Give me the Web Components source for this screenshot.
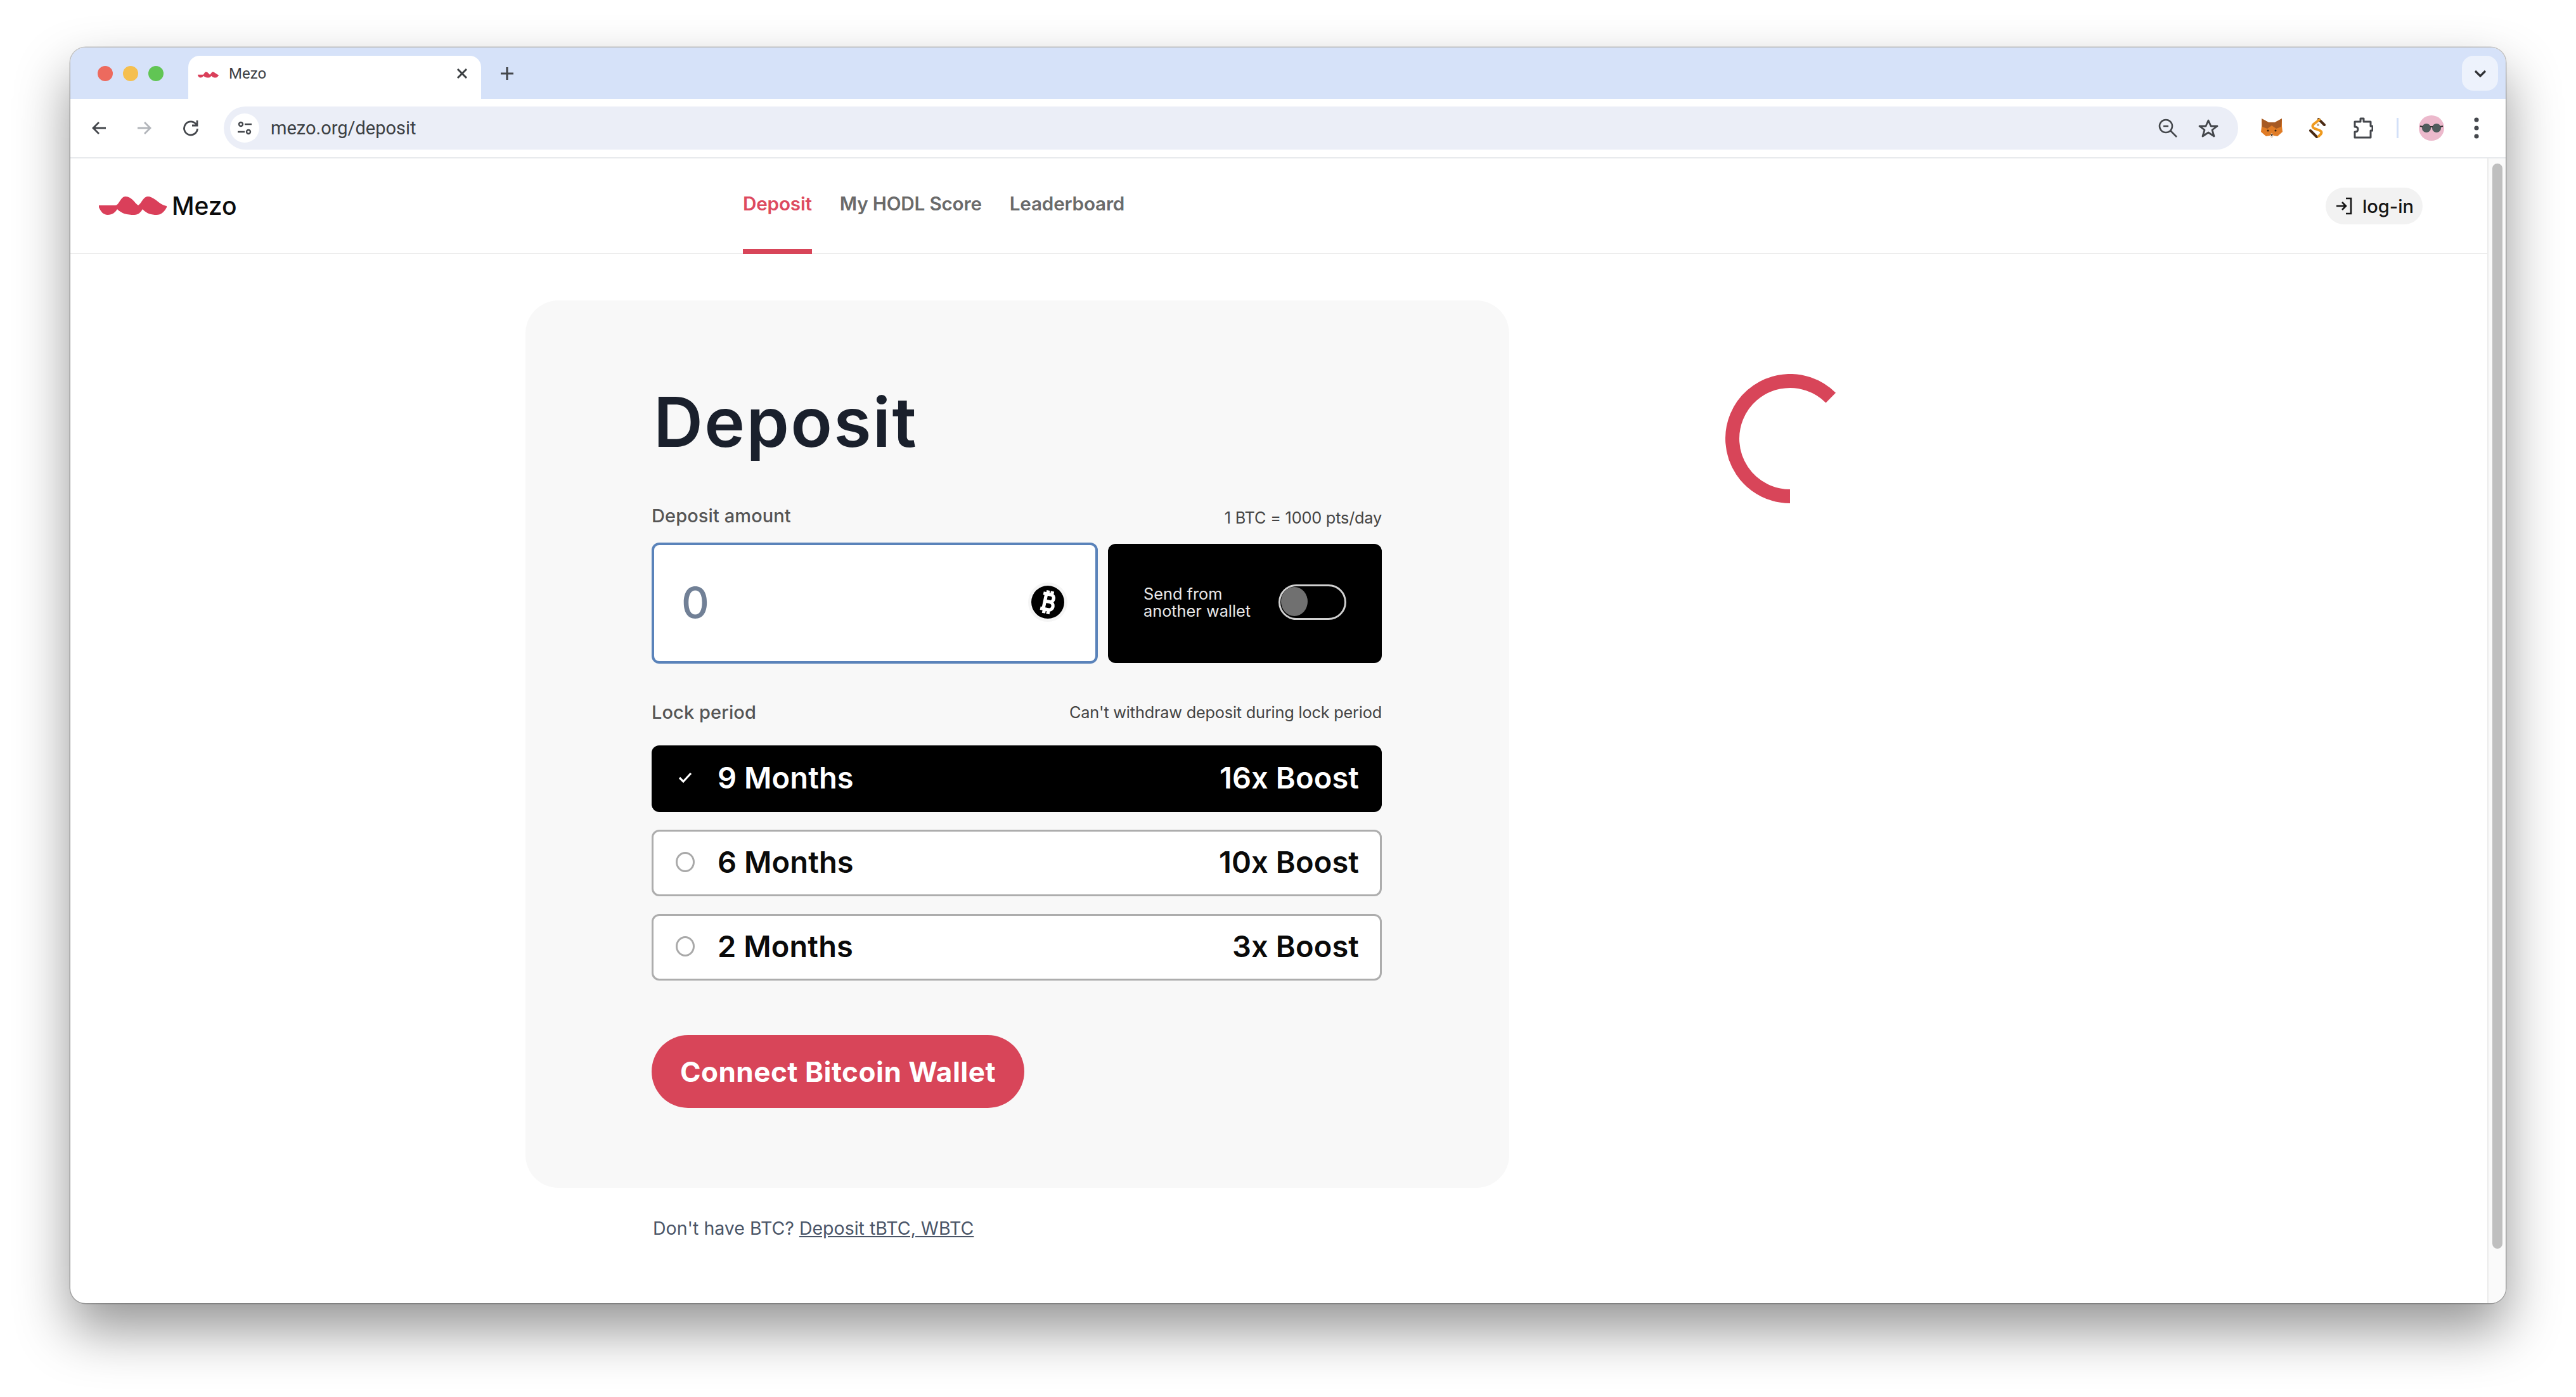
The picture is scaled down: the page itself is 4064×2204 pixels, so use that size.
<!DOCTYPE html>
<html lang="en"><head><meta charset="utf-8"><title>Mezo</title>
<style>
html,body{margin:0;padding:0;background:#fff}
body{width:4064px;height:2204px;overflow:hidden;box-sizing:border-box;padding:75px 0 0 111px;font-family:Inter,"Liberation Sans",sans-serif}
</style></head><body>
<browser-window>
  <tab-strip slot="tabs"></tab-strip>
  <browser-toolbar slot="toolbar"></browser-toolbar>
  <site-header></site-header>
  <deposit-page></deposit-page>
</browser-window>
<script>
const def=(name,html)=>customElements.define(name,class extends HTMLElement{
  constructor(){super();this.attachShadow({mode:'open'}).innerHTML=typeof html==='function'?html(this):html;}
});
const LOGO=`<path d="M0 14H26C32 14 34 0 42 0C52 0 56 10 62 14C68 10 70 0 77 0C88 0 96 14 107 15V17C104 23 99 29 91 29C83 29 75 27 69 20C66 25 62 29 56 29C44 29 36 27 29 20C26 25 21 29 14 29C7 29 3 24 0 17Z" fill="#da3f5a"/>`;

def('browser-window',`<style>
:host{display:flex;flex-direction:column;width:3842px;height:1981px;border-radius:24px;overflow:hidden;background:#fff;
box-shadow:0 0 0 1.5px rgba(0,0,0,.22),0 42px 85px rgba(0,0,0,.42)}
.page{flex:1;display:flex;min-height:0}
.content{flex:1;min-width:0;display:flex;flex-direction:column}
.bar{width:29px;flex:none;background:#fafafa;border-left:2px solid #ececec;padding:8px 0 0 6px;box-sizing:border-box}
.thumb{width:16px;height:1712px;background:#bfbfbf;border-radius:8px}
</style><slot name="tabs"></slot><slot name="toolbar"></slot>
<div class="page"><div class="content"><slot></slot></div><div class="bar"><div class="thumb"></div></div></div>`);

def('tab-strip',`<style>
:host{display:flex;align-items:flex-end;height:81px;background:#d6e2f9;position:relative;font-family:Roboto,Inter,sans-serif}
.lights{display:flex;gap:16px;padding:0 0 28px 43px;width:143px;box-sizing:content-box;flex:none}
.lights i{width:24px;height:24px;border-radius:50%;display:block}
.tab{width:462px;height:68px;background:#fff;border-radius:18px 18px 0 0;display:flex;align-items:flex-start;box-sizing:border-box;padding:14px 0 0 15px;flex:none;color:#3c4043;font-size:24px;line-height:28px}
.tab svg.f{margin:11px 16px 0 0;flex:none}
.tab span{flex:1}
.tab svg.x{margin:4px 20px 0 0}
.plus{margin:0 0 27px 28px}
.more{position:absolute;right:12px;top:13px;width:57px;height:55px;border-radius:18px;background:#edf2fc;display:flex;align-items:center;justify-content:center}
</style>
<div class="lights"><i style="background:#ed6a5e"></i><i style="background:#f5bf4f"></i><i style="background:#61c554"></i></div>
<div class="tab"><svg class="f" width="33" height="10" viewBox="0 0 107 29">${LOGO}</svg><span>Mezo</span>
<svg class="x" width="20" height="20" viewBox="0 0 20 20" fill="none" stroke="#3c4043" stroke-width="3"><path d="M3 3L17 17M17 3L3 17"/></svg></div>
<svg class="plus" width="26" height="26" viewBox="0 0 26 26" fill="none" stroke="#44474c" stroke-width="3.2"><path d="M13 3V23M3 13H23"/></svg>
<div class="more"><svg width="20" height="14" viewBox="0 0 20 14" fill="none" stroke="#2f3134" stroke-width="3.2"><path d="M2 3L10 11L18 3"/></svg></div>`);

def('browser-toolbar',`<style>
:host{display:flex;align-items:center;height:92px;background:#fff;border-bottom:2px solid #e8eaed;box-sizing:content-box;font-family:Roboto,Inter,sans-serif;padding:0}
svg{flex:none;display:block}
.nav{display:flex;align-items:center;gap:48px;padding-left:33px;width:242px;box-sizing:border-box;flex:none}
.url{width:3178px;height:68px;border-radius:34px;background:#ebeef7;display:flex;align-items:center;flex:none;box-sizing:border-box;padding-left:10px;color:#3c4043;font-size:29px}
.site{width:46px;height:46px;border-radius:50%;background:#fff;display:flex;align-items:center;justify-content:center;flex:none;margin-right:18px}
.url span{flex:1}
.url svg.z{margin-right:33px}
.url svg.s{margin-right:31px}
.ext{display:flex;align-items:center;flex:none;padding-left:36px}
</style>
<div class="nav">
<svg width="24" height="24" viewBox="0 0 24 24" fill="none" stroke="#44474c" stroke-width="2.8"><path d="M23 12H3M12 3L3 12L12 21"/></svg>
<svg width="24" height="24" viewBox="0 0 24 24" fill="none" stroke="#b2b5ba" stroke-width="2.8"><path d="M1 12H21M12 3L21 12L12 21"/></svg>
<svg width="26" height="28" viewBox="0 0 26 28" fill="none" stroke="#44474c" stroke-width="2.8"><path d="M22 9A10.5 10.5 0 1 0 23.5 15"/><path d="M23 2V10H15"/></svg>
</div>
<div class="url"><div class="site"><svg width="24" height="24" viewBox="0 0 24 24" fill="none" stroke="#44474c" stroke-width="2.4"><circle cx="6" cy="6" r="3"/><path d="M12 6H23M1 18H12"/><circle cx="18" cy="18" r="3"/></svg></div>
<span>mezo.org/deposit</span>
<svg class="z" width="30" height="30" viewBox="0 0 30 30" fill="none" stroke="#44474c" stroke-width="2.6"><circle cx="12" cy="12" r="10"/><path d="M8 12H16M19 19L29 29"/></svg>
<svg class="s" width="32" height="30" viewBox="0 0 32 30" fill="none" stroke="#44474c" stroke-width="2.8" stroke-linejoin="round"><path d="M16 3L20 12H30L22 18L25 28L16 22L7 28L10 18L2 12H12Z"/></svg></div>
<div class="ext">
<svg width="34" height="32" viewBox="0 0 34 32"><path d="M1 1L12 7H22L33 1L33 13L34 22L26 29L20 28L17 32L14 28L8 29L0 22L1 13Z" fill="#e07c26"/><path d="M1 1L12 7H22L33 1L32 14L24 17L17 12L10 17L2 14Z" fill="#a65a24"/><path d="M14 28L17 24L20 28L17 32Z" fill="#f2e6da"/><circle cx="11" cy="20" r="1.6" fill="#3a2412"/><circle cx="23" cy="20" r="1.6" fill="#3a2412"/><path d="M15 26H19L17 29Z" fill="#2b1a0c"/></svg>
<svg style="margin-left:42px" width="26" height="34" viewBox="0 0 26 34" fill="none" stroke-width="4" stroke-linecap="round"><path d="M2 21L12 31" stroke="#4a2a14"/><path d="M15 3L24 12" stroke="#4a2a14"/><path d="M16 4L7 11C4 14 6 17 9 18L17 21C21 23 20 26 15 30" stroke="#ef9a1e"/><circle cx="14" cy="12" r="2" fill="#b9a58f"/></svg>
<svg style="margin-left:43px" width="32" height="36" viewBox="0 0 32 36" fill="none" stroke="#44474c" stroke-width="3" stroke-linejoin="round"><path d="M3 8H12V3H17V8H28V15H31V22H28V33H3V24C7 24 8 22 8 20C8 18 7 16 3 16Z"/></svg>
<div style="width:3px;height:32px;background:#d3e0f8;margin-left:37px"></div>
<svg style="margin-left:32px" width="40" height="40" viewBox="0 0 40 40"><circle cx="20" cy="20" r="20" fill="#ecb9cc"/><circle cx="12" cy="20" r="7" fill="#4f5b5c"/><circle cx="28" cy="20" r="7" fill="#4f5b5c"/><path d="M2 17L6 18M34 18L38 17M18 18H22" stroke="#333" stroke-width="2"/></svg>
<svg style="margin-left:47px" width="8" height="36" viewBox="0 0 8 36" fill="#44474c"><circle cx="4" cy="5" r="3.6"/><circle cx="4" cy="18" r="3.6"/><circle cx="4" cy="31" r="3.6"/></svg>
</div>`);

def('site-header',`<style>
:host{display:flex;height:149px;border-bottom:2px solid #ededed;box-sizing:content-box;font-family:Inter,sans-serif;flex:none}
.logo{display:flex;align-items:center;gap:8px;padding-left:45px;width:1016px;box-sizing:content-box;flex:none;font-size:39px;font-weight:500;color:#0c0c0c;letter-spacing:0}
nav{display:flex;gap:44px;flex:none;font-size:29.7px;font-weight:600;color:#6a6a6a;letter-spacing:-.2px}
nav a{display:block;height:151px;box-sizing:border-box;padding-top:53px;line-height:36px}
nav a.on{color:#dd4a60;border-bottom:8px solid #d84559}
.login{margin:46px 102px 0 auto;height:58px;border-radius:29px;background:#f2f2f2;display:flex;align-items:center;gap:16px;padding:0 14px 0 16px;font-size:29px;font-weight:500;color:#151515;box-sizing:border-box}
</style>
<div class="logo"><svg width="107" height="29" viewBox="0 0 107 29">${LOGO}</svg><span>Mezo</span></div>
<nav><a class="on">Deposit</a><a>My HODL Score</a><a>Leaderboard</a></nav>
<div class="login"><svg width="26" height="30" viewBox="0 0 26 30" fill="none" stroke="#151515" stroke-width="2.6"><path d="M1 15H16M10 9L16 15L10 21M16 3H24V27H16"/></svg><span>log-in</span></div>`);

def('lock-option',h=>{const on=h.hasAttribute('selected');return `<style>
:host{display:flex;align-items:center;height:105px;box-sizing:border-box;border-radius:12px;padding:0 36px 4px 38px;font-size:47px;font-weight:600;letter-spacing:.1px;
${on?'background:#000;color:#fff;':'background:#fff;color:#0a0a0a;border:3px solid #adadad;padding:0 33px 4px 35px;'}}
.m{width:30px;height:30px;display:flex;align-items:center;justify-content:center;margin-right:36px;flex:none}
.r{width:26px;height:26px;border:3px solid #a9a9a9;border-radius:50%}
.l{flex:1}
</style><div class="m">${on?'<svg width="22" height="18" viewBox="0 0 22 18" fill="none" stroke="#fff" stroke-width="3.2"><path d="M2 9L8 15L20 2"/></svg>':'<div class="r"></div>'}</div><span class="l"><slot name="period"></slot></span><slot name="boost"></slot>`});

def('deposit-card',`<style>
:host{display:block;width:1552px;height:1400px;box-sizing:border-box;background:#f8f8f8;border-radius:52px;padding:127px 201px 0 199px;font-family:Inter,sans-serif}
h1{margin:0 0 0 3px;font-size:108px;font-weight:600;color:#1a202c;line-height:130px;height:130px;letter-spacing:2.3px}
.lab{display:flex;justify-content:space-between;align-items:center;height:34px;font-size:29px;font-weight:500;color:#555;letter-spacing:.1px}
.lab small{font-size:25.3px;font-weight:400;color:#444;letter-spacing:-.2px}
.row{display:flex;gap:16px;align-items:center;height:191px;margin-top:26px}
.input{width:704px;height:191px;box-sizing:border-box;background:#fff;border:4px solid #5a83ba;border-radius:12px;display:flex;align-items:center;justify-content:space-between;padding:0 49px 3px 43px;font-size:68px;font-weight:500;color:#718096}
.btc{width:52px;height:52px;border-radius:50%;background:#000;box-shadow:0 0 0 5px #f5f5f5}
.send{width:432px;height:188px;box-sizing:border-box;background:#000;border-radius:12px;display:flex;align-items:center;padding:0 56px 4px;font-size:25.3px;line-height:27px;color:#e8e8e8;justify-content:space-between;white-space:nowrap}
.tog{width:107px;height:56px;box-sizing:border-box;border:3px solid #d0d0d0;border-radius:28px;padding:1px 0 0 1px}
.tog i{display:block;width:42px;height:46px;border-radius:50%;background:#707070}
.list{display:flex;flex-direction:column;gap:28px;margin-top:36px}
.cta{display:flex;align-items:center;justify-content:center;width:588px;height:115px;border-radius:58px;background:#d84559;color:#fff;font-size:44px;font-weight:700;margin-top:86px;letter-spacing:.5px}
</style>
<h1>Deposit</h1>
<div class="lab" style="margin-top:65px"><span>Deposit amount</span><small style="padding-top:6px">1 BTC = 1000 pts/day</small></div>
<div class="row"><div class="input"><span>0</span>
<svg class="btc" viewBox="0 0 54 54"><g transform="rotate(12 27 27)" fill="none" stroke="#fff" stroke-width="5.5"><path d="M17 14H30C37 14 37 26 30 26H20M30 26C39 26 39 39 30 39H17M22 14V39M24 8V14M31 8V14M24 39V46M31 39V46"/></g></svg></div>
<div class="send"><span>Send from<br>another wallet</span><div class="tog"><i></i></div></div></div>
<div class="lab" style="margin-top:59px"><span>Lock period</span><small>Can't withdraw deposit during lock period</small></div>
<div class="list"><slot></slot></div>
<div class="cta">Connect Bitcoin Wallet</div>`);

def('deposit-page',`<style>
:host{display:flex;flex-direction:row;align-items:flex-start;padding:73px 0 0 718px;font-family:Inter,sans-serif}
.col{flex:none}
p{margin:46px 0 0 201px;font-size:28.5px;line-height:36px;color:#4a5568}
a{text-decoration:underline}
.sp{margin:116px 0 0 341px;flex:none;display:block}
</style>
<div class="col"><deposit-card>
<lock-option selected><span slot="period">9 Months</span><span slot="boost">16x Boost</span></lock-option>
<lock-option><span slot="period">6 Months</span><span slot="boost">10x Boost</span></lock-option>
<lock-option><span slot="period">2 Months</span><span slot="boost">3x Boost</span></lock-option>
</deposit-card>
<p>Don't have BTC? <a>Deposit tBTC, WBTC</a></p></div>
<svg class="sp" width="204" height="204" viewBox="0 0 204 204" fill="none"><path d="M102 193A91 91 0 1 1 166.3 37.6" stroke="#d84559" stroke-width="22"/></svg>`);
</script>
</body></html>
